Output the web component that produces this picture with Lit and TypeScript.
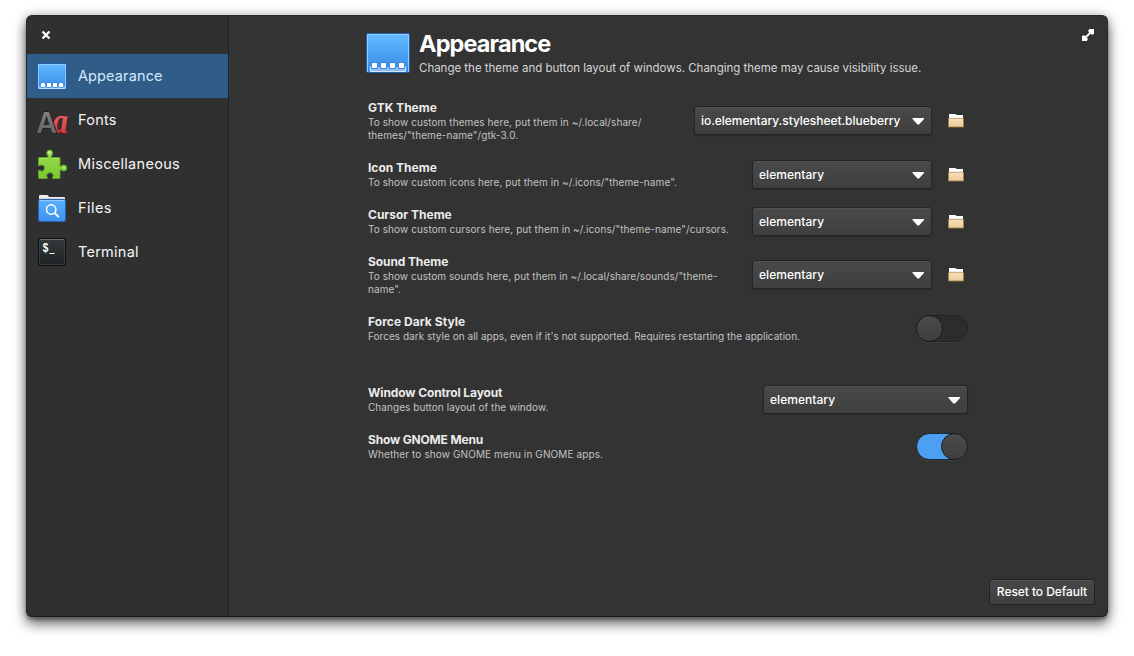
import { LitElement, html, css, svg } from "lit";
import { customElement, property } from "lit/decorators.js";
import { classMap } from "lit/directives/class-map.js";
import { styleMap } from "lit/directives/style-map.js";

const dockIcon = html`<svg width="48" height="48" viewBox="0 0 48 48">
  <defs><linearGradient id="d" x1="0" y1="0" x2="0" y2="1"><stop offset="0" stop-color="#64baff"/><stop offset="1" stop-color="#3689e6"/></linearGradient></defs>
  <rect x="2.5" y="4.5" width="43" height="39" rx="1.5" fill="url(#d)" stroke="#1f5eb0"/>
  <path d="M3.5 43V5.500h41V43" fill="none" stroke="#a5d6ff" stroke-opacity=".8"/>
  <path d="M6 38h36v5H6z" fill="#8fc0f5"/><path d="M6.500 37.500v5h35v-5" fill="none" stroke="#d3e6fb"/>
  ${[8, 17, 26, 35].map((x) => svg`<rect x=${x - 1} y="33" width="7" height="7" rx="1.500" fill="#3d85de"/><rect x=${x} y="34" width="5" height="5" rx=".8" fill="#fff"/>`)}
</svg>`;

const smallDock = html`<svg width="32" height="32" viewBox="0 0 32 32">
  <defs><linearGradient id="s" x1="0" y1="0" x2="0" y2="1"><stop offset="0" stop-color="#64baff"/><stop offset="1" stop-color="#3689e6"/></linearGradient></defs>
  <rect x="1.500" y="3.500" width="29" height="26" rx="1.500" fill="url(#s)" stroke="#2360b0"/>
  <path d="M2.500 28.500v-24h27v24" fill="none" stroke="#9bd1ff" stroke-opacity=".8"/>
  <path d="M4.500 25.500h23l1 3h-25z" fill="#8fc0f5" stroke="#c2ddfb"/>
  ${[5, 11, 17, 23].map((x) => svg`<rect x=${x - 0.7} y="22.300" width="5.400" height="5.400" rx="1" fill="#3a86df"/><rect x=${x} y="23" width="4" height="4" rx=".6" fill="#fff"/>`)}
</svg>`;

const fontsIcon = html`<svg width="32" height="32" viewBox="0 0 32 32">
  <defs>
    <linearGradient id="g" x1="0" y1="0" x2="0" y2="1"><stop offset="0" stop-color="#8a8a8a"/><stop offset="1" stop-color="#5c5c5c"/></linearGradient>
    <linearGradient id="r" x1="0" y1="0" x2="0" y2="1"><stop offset="0.3" stop-color="#f06a6a"/><stop offset="1" stop-color="#c6262e"/></linearGradient>
  </defs>
  <g transform="translate(16.500 29) scale(.86 1)"><text class="glyph serif" fill="url(#r)">a</text></g>
  <text x="0" y="28.500" class="glyph sans" fill="url(#g)">A</text>
</svg>`;

const puzzleIcon = html`<svg width="32" height="32" viewBox="0 0 32 32">
  <defs><linearGradient id="p" x1="0" y1="0" x2="0" y2="1"><stop offset="0" stop-color="#9bdb4d"/><stop offset="1" stop-color="#7cc834"/></linearGradient></defs>
  <path d="M3.500 9.500H12C12.600 8 10.700 7 10.700 5a3 3 0 0 1 6 0c0 2-1.900 3-1.300 4.500H23q1 0 1 1v7.700c1.200.600 1.900-1.200 3.900-1.200a3 3 0 0 1 0 6c-2 0-2.700-1.800-3.900-1.200V29.500q0 1-1 1h-6.300V29c1.200-1.500.3-4.200-2.700-4.200s-4 2.700-2.800 4.200v1.500H3.500q-1 0-1-1V22.600h1.800c1.500 1.200 4.200.3 4.200-2.600s-2.700-3.800-4.200-2.600H2.500v-6.900q0-1 1-1z" fill="url(#p)" stroke="#5ba822"/>
  <path d="M3.500 10.500H12M16 10.500h7" stroke="#c4f27c" stroke-opacity=".6"/>
  <circle cx="13.700" cy="4.600" r="1.600" fill="#cdf39a"/><circle cx="28" cy="19.600" r="1.300" fill="#b5e878"/>
</svg>`;

const filesIcon = html`<svg width="32" height="32" viewBox="0 0 32 32">
  <defs><linearGradient id="f" x1="0" y1="0" x2="0" y2="1"><stop offset="0" stop-color="#5eb0fb"/><stop offset="1" stop-color="#3d90ee"/></linearGradient></defs>
  <path d="M3 8V4.200Q3 3 4.200 3H11q1.200 0 2 2H28q1 0 1 1v3H3z" fill="#efefef"/>
  <path d="M3 6.500h26" stroke="#d4d4d4"/>
  <rect x="2.500" y="7.500" width="27" height="22" rx="1.800" fill="url(#f)" stroke="#2563b4"/>
  <path d="M3.500 8.500h25" stroke="#8ccaff"/>
  <circle cx="15.200" cy="17.500" r="4.700" fill="none" stroke="#fff" stroke-width="1.500"/>
  <path d="m18.600 20.900 4.200 4.200" stroke="#fff" stroke-width="2"/>
</svg>`;

const terminalIcon = html`<svg width="32" height="32" viewBox="0 0 32 32">
  <defs><linearGradient id="t" x1="0" y1="0" x2="0" y2="1"><stop offset="0" stop-color="#343b3d"/><stop offset="1" stop-color="#1d2223"/></linearGradient></defs>
  <rect x="2.500" y="2.500" width="27" height="27" rx="2" fill="url(#t)" stroke="#0e0e0e"/>
  <path d="M4 3.500h24" stroke="#697072"/><path d="M3.500 4v24M28.500 4v24M4 28.500h24" stroke="#434a4c" stroke-opacity=".7"/>
  <g transform="translate(6.500 16.300) scale(.85 1)"><text class="glyph prompt">$</text></g><path d="M13.500 17.500h5" stroke="#fff"/>
</svg>`;

const folderIcon = html`<svg width="16" height="16" viewBox="0 0 16 16">
  <defs><linearGradient id="o" x1="0" y1="0" x2="0" y2="1"><stop offset="0" stop-color="#f9e0b8"/><stop offset="1" stop-color="#e9cc9d"/></linearGradient></defs>
  <path d="M1 7V2h6.500l1 1H15v4z" fill="#fff"/><path d="M1 5.500h14" stroke="#efefef"/>
  <rect x=".5" y="6.500" width="15" height="8.500" fill="url(#o)" stroke="#a07a3c" stroke-opacity=".85"/>
  <path d="M1 6.500h14" stroke="#c9ae84"/>
</svg>`;

@customElement("pick-box")
class PickBox extends LitElement {
  @property() value = "";
  static styles = css`
    :host { box-sizing: border-box; height: 29px; display: flex; align-items: center; justify-content: space-between;
      padding: 0 7px 0 6px; border-radius: 3px; background: linear-gradient(#494949, #3f3f3f);
      border: 1px solid #242424; box-shadow: inset 0 1px #505050, 0 1px 1px #2b2b2b;
      color: #fff; font: 500 12px/27px Inter, sans-serif; letter-spacing: 0.04px; white-space: nowrap; }
    .arrow { display: block; flex: none; margin-top: 1px; }
  `;
  render() {
    return html`<span>${this.value}</span><svg class="arrow" width="12" height="8" viewBox="0 0 12 8"><path d="M.5 1h11.500v1L7 7.500H5.500L.5 2z" fill="#fff"/></svg>`;
  }
}

@customElement("toggle-switch")
class ToggleSwitch extends LitElement {
  @property({ type: Boolean }) on = false;
  static styles = css`
    .track { box-sizing: border-box; width: 52px; height: 27px; border-radius: 14px; display: flex;
      background: #2c2c2c; border: 1px solid #232323; box-shadow: 0 1px #3c3c3c; }
    .track.on { background: #4d9ff1; border-color: #1d2833; justify-content: flex-end; }
    .knob { box-sizing: border-box; width: 27px; height: 27px; margin: -1px; border-radius: 50%;
      border: 1px solid #1a1a1a; background: linear-gradient(#4a4a4a, #3f3f3f); }
  `;
  render() {
    return html`<div class=${classMap({ track: true, on: this.on })}><div class="knob"></div></div>`;
  }
}

interface Row { name: string; lines: string[]; size?: string; value?: string; folder?: boolean; toggle?: boolean; gap?: boolean; tight?: number; loose?: number; }

const rows: Row[] = [
  { name: "GTK Theme", lines: ["To show custom themes here, put them in ~/.local/share/", 'themes/"theme-name"/gtk-3.0.'], size: "wide", value: "io.elementary.stylesheet.blueberry", folder: true },
  { name: "Icon Theme", lines: ['To show custom icons here, put them in ~/.icons/"theme-name".'], size: "mid", value: "elementary", folder: true },
  { name: "Cursor Theme", lines: ['To show custom cursors here, put them in ~/.icons/"theme-name"/cursors.'], size: "mid", value: "elementary", folder: true, loose: 0.09 },
  { name: "Sound Theme", lines: ['To show custom sounds here, put them in ~/.local/share/sounds/"theme-', 'name".'], size: "mid", value: "elementary", folder: true, loose: 0.06, tight: -0.1 },
  { name: "Force Dark Style", lines: ["Forces dark style on all apps, even if it's not supported. Requires restarting the application."], toggle: false, loose: 0.03, tight: 0.05 },
  { name: "Window Control Layout", lines: ["Changes button layout of the window."], size: "layout", value: "elementary", gap: true, tight: -0.12, loose: 0.06 },
  { name: "Show GNOME Menu", lines: ["Whether to show GNOME menu in GNOME apps."], toggle: true, tight: -0.17, loose: 0.11 },
];

const pages = [
  { name: "Appearance", icon: smallDock, tracking: 0.12 },
  { name: "Fonts", icon: fontsIcon, tracking: 0.25 },
  { name: "Miscellaneous", icon: puzzleIcon, tracking: 0.3 },
  { name: "Files", icon: filesIcon, tracking: 0.45 },
  { name: "Terminal", icon: terminalIcon, tracking: 0.25 },
];

const tracked = (n: number) => styleMap({ letterSpacing: `${n}px` });

@customElement("app-root")
class AppRoot extends LitElement {
  static styles = css`
    :host { display: block; box-sizing: border-box; height: 656px; padding: 15px 26px 39px; background: #fff; overflow: hidden;
      font-family: Inter, sans-serif; color: #fff; }
    svg { display: block; flex: none; overflow: visible; }
    .window { box-sizing: border-box; height: 602px; display: flex; border-radius: 6px; background: #333; overflow: hidden;
      border: 1px solid #292929; border-bottom-color: #1a1a1a; box-shadow: 0 3px 3px rgba(0,0,0,.25), 0 7px 13px rgba(0,0,0,.55), 0 0 12px rgba(0,0,0,.22); }
    .side { width: 201px; background: #303030; border-right: 1px solid #222; flex: none; }
    .close { display: flex; height: 38px; padding: 15px 0 0 15px; box-sizing: border-box; }
    .page { height: 44px; display: flex; align-items: center; padding-left: 9px; gap: 10px; font-size: 14.5px; color: #f5f5f5; }
    .label { padding-bottom: 2px; }
    .page.current { background: #305d88; color: #d2e7fb; }
    .glyph { stroke-width: 1px; paint-order: stroke; }
    .serif { font: italic bold 36px "Liberation Serif", serif; stroke: #611719; }
    .sans { font: 600 29px Inter, sans-serif; stroke: #1d1d1d; stroke-width: 1.6px; }
    .prompt { font: bold 12px "Liberation Mono", monospace; fill: #fff; }
    .main { flex: 1; display: grid; grid-template-columns: 134px 605px 1fr; border-left: 1px solid #393939; }
    .body { grid-column: 2; }
    .head { display: flex; gap: 7px; padding-top: 13px; height: 84px; box-sizing: border-box; }
    .title { font-size: 23.5px; font-weight: 700; line-height: 30px; letter-spacing: -.9px; }
    .sub { font-size: 11.5px; line-height: 16px; margin-top: 1px; color: #d6d6d6; white-space: nowrap; letter-spacing: -.012px; }
    .rows { display: flex; flex-direction: column; gap: 18px; padding: 0 1px 0 4px; }
    .row { display: flex; align-items: center; min-height: 29px; }
    .row.gap { margin-top: 24px; }
    .row.tall > :not(.text) { margin-bottom: 1px; }
    .text { flex: 1; white-space: nowrap; align-self: flex-start; }
    .name { font-size: 12px; font-weight: 700; line-height: 16px; color: #ebebeb; }
    .line { font-size: 10px; line-height: 13px; color: #c2c2c2; }
    .wide { width: 238px; letter-spacing: -.04px; } .mid { width: 180px; } .layout { width: 205px; }
    .folder { padding: 0 4px 1px 16px; }
    .tools { display: flex; flex-direction: column; justify-content: space-between; align-items: flex-end; padding: 13px 12px 11px 0; }
    .expand { margin-right: 1px; }
    .reset { box-sizing: border-box; height: 26px; width: 106px; text-align: center; font-size: 12px; line-height: 24px; font-weight: 500; letter-spacing: -.06px;
      border: 1px solid #242424; border-radius: 3px; background: linear-gradient(#484848, #3f3f3f); box-shadow: inset 0 1px #505050; white-space: nowrap; }
  `;

  render() {
    return html`<div class="window">
      <nav class="side">
        <div class="close"><svg width="8" height="8" viewBox="0 0 8 8"><path d="m.5.500 7 7M7.500.5l-7 7" stroke="#fff" stroke-width="2.300"/></svg></div>
        ${pages.map((p, i) => html`<div class=${classMap({ page: true, current: i === 0 })}>${p.icon}<span class="label" style=${tracked(p.tracking)}>${p.name}</span></div>`)}
      </nav>
      <main class="main">
        <div class="body">
          <header class="head">${dockIcon}<div><div class="title">Appearance</div><div class="sub">Change the theme and button layout of windows. Changing theme may cause visibility issue.</div></div></header>
          <section class="rows">
            ${rows.map((r) => html`<div class=${classMap({ row: true, gap: !!r.gap, tall: r.lines.length > 1 })}>
              <div class="text"><div class="name" style=${tracked(r.tight ?? 0)}>${r.name}</div>${r.lines.map((l) => html`<div class="line" style=${tracked(r.loose ?? 0.08)}>${l}</div>`)}</div>
              ${r.value ? html`<pick-box class=${r.size!} .value=${r.value}></pick-box>` : html`<toggle-switch .on=${!!r.toggle}></toggle-switch>`}
              ${r.folder ? html`<div class="folder">${folderIcon}</div>` : ""}
            </div>`)}
          </section>
        </div>
        <aside class="tools">
          <svg class="expand" width="12" height="12" viewBox="0 0 12 12"><path d="M7 0h5v5h-1L7 1zM0 7v5h5v-1L1 7z" fill="#fff"/><path d="M7 .500 11.500 5 10 6 6 2zM.500 7 5 11.500 6 10 2 6z" fill="#fff"/><path d="m2.500 9.500 7-7" stroke="#fff" stroke-width="1.800"/></svg>
          <div class="reset">Reset to Default</div>
        </aside>
      </main>
    </div>`;
  }
}
